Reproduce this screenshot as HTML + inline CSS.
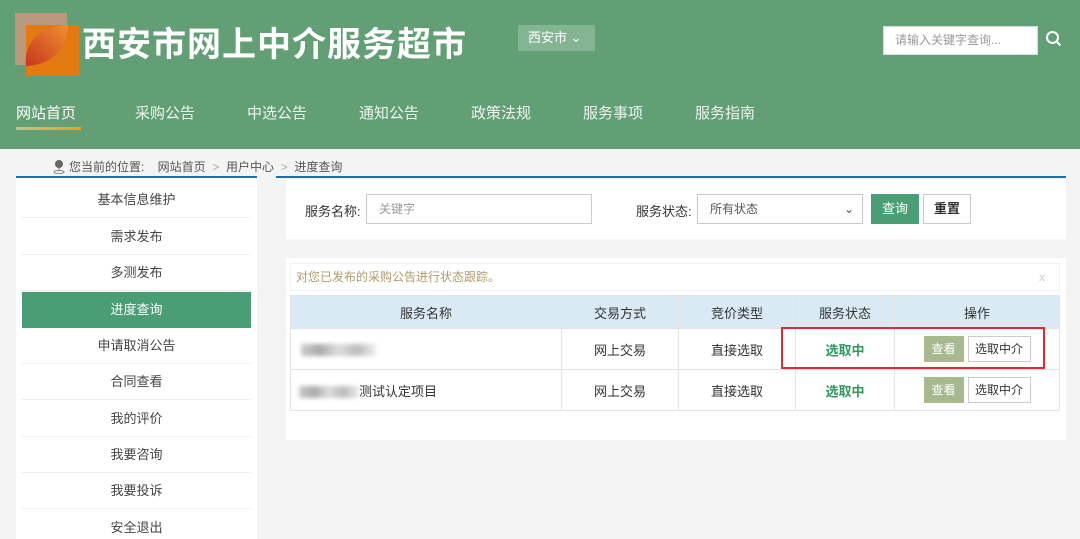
<!DOCTYPE html>
<html><head><meta charset="utf-8"><style>
*{margin:0;padding:0;box-sizing:border-box}
html,body{width:1080px;height:539px;overflow:hidden}
body{background:#f4f4f4;font-family:"Liberation Sans","Noto Sans CJK SC",sans-serif;color:#333;position:relative;font-size:13px}
.abs{position:absolute}
.hdr{left:0;top:0;width:1080px;height:149px;background:#639f75}
.title{left:82px;top:22px;font-size:34px;color:#fff;font-weight:bold;letter-spacing:1px;line-height:46px}
.city{left:518px;top:25px;width:77px;height:26px;background:#84b592;color:#fff;font-size:13px;line-height:26px;padding-left:10px}
.sbox{left:883px;top:26px;width:155px;height:29px;background:#fff;border:1px solid #ddd;color:#999;font-size:12px;line-height:27px;padding-left:11px}
.nav{top:104px;font-size:15px;color:#eef5ef;line-height:20px}
.crumb{top:158px;font-size:12px;color:#555;line-height:18px}
.side{left:16px;top:176px;width:241px;height:363px;background:#fff;border-top:2px solid #1f6fa8}
.item{position:absolute;left:6px;width:229px;height:36px;text-align:center;line-height:36px;font-size:13px;color:#444;border-bottom:1px solid #eee}
.item.on{background:#4a9e75;color:#fff;border:none}
.panel{background:#fff}
.inp{border:1px solid #ccc;background:#fff;height:30px;line-height:28px;padding-left:12px;color:#999;font-size:12px}
table{border-collapse:collapse;position:absolute;left:290px;top:295px;width:770px;font-size:13px}
td,th{border:1px solid #e3e3e3;text-align:center;font-weight:normal;color:#333}
th{background:#d9eaf4;height:33px}
td{height:41px}
.g{color:#2e9a5e;font-weight:bold}
.bv{display:inline-block;width:40px;height:26px;line-height:26px;background:#a8b98f;color:#fff;font-size:12px;vertical-align:middle}
.bs{display:inline-block;width:63px;height:26px;line-height:24px;border:1px solid #ccc;background:#fff;font-size:12px;margin-left:4px;vertical-align:middle}
.blur{display:inline-block;height:12px;background:linear-gradient(90deg,#ccc,#aaa,#ddd,#bbb,#eee);filter:blur(2px);vertical-align:middle}
</style></head><body>
<div class="abs hdr"></div>
<div class="abs" style="left:15px;top:13px;width:52px;height:52px;background:#b99a7d"></div>
<div class="abs" style="left:26px;top:25px;width:53px;height:51px;background:#e27a10"></div>
<svg class="abs" style="left:15px;top:13px" width="64" height="64"><defs><linearGradient id="lg" x1="0" y1="1" x2="1" y2="0"><stop offset="0" stop-color="#c8361e"/><stop offset="1" stop-color="#ef9030"/></linearGradient></defs><path d="M11 53 C8 28 28 12 53 12 C53 36 36 52 11 53Z" fill="url(#lg)"/></svg>
<div class="abs title">西安市网上中介服务超市</div>
<div class="abs city">西安市 ⌄</div>
<div class="abs sbox">请输入关键字查询...</div>
<svg class="abs" style="left:1045px;top:30px" width="18" height="18"><circle cx="7.5" cy="7.5" r="5.5" stroke="#fff" stroke-width="2" fill="none"/><path d="M11.5 11.5 L15.5 15.5" stroke="#fff" stroke-width="2"/></svg>
<div class="abs nav" style="left:16px;color:#fff">网站首页</div>
<div class="abs" style="left:16px;top:127px;width:65px;height:3px;background:linear-gradient(90deg,#b5c79d,#f0a010)"></div>
<div class="abs nav" style="left:135px">采购公告</div>
<div class="abs nav" style="left:247px">中选公告</div>
<div class="abs nav" style="left:359px">通知公告</div>
<div class="abs nav" style="left:471px">政策法规</div>
<div class="abs nav" style="left:583px">服务事项</div>
<div class="abs nav" style="left:695px">服务指南</div>
<svg class="abs" style="left:53px;top:159px" width="12" height="15"><circle cx="6" cy="5" r="4" fill="#666"/><path d="M6 9 L6 12" stroke="#666"/><ellipse cx="6" cy="13" rx="5" ry="1.5" fill="none" stroke="#888"/></svg>
<div class="abs crumb" style="left:69px">您当前的位置:&nbsp;&nbsp;&nbsp;&nbsp;网站首页&nbsp;&nbsp;<span style="color:#aaa">&gt;</span>&nbsp;&nbsp;用户中心&nbsp;&nbsp;<span style="color:#aaa">&gt;</span>&nbsp;&nbsp;进度查询</div>
<div class="abs" style="left:276px;top:176px;width:790px;height:2px;background:#1f6fa8"></div>
<div class="abs side">
<div class="item" style="top:4px">基本信息维护</div>
<div class="item" style="top:41px">需求发布</div>
<div class="item" style="top:77px">多测发布</div>
<div class="item on" style="top:114px">进度查询</div>
<div class="item" style="top:150px">申请取消公告</div>
<div class="item" style="top:186px">合同查看</div>
<div class="item" style="top:223px">我的评价</div>
<div class="item" style="top:259px">我要咨询</div>
<div class="item" style="top:295px">我要投诉</div>
<div class="item" style="top:332px;border:none">安全退出</div>
</div>
<div class="abs panel" style="left:286px;top:179px;width:780px;height:60px"></div>
<div class="abs" style="left:305px;top:201px">服务名称:</div>
<div class="abs inp" style="left:366px;top:194px;width:226px">关键字</div>
<div class="abs" style="left:636px;top:201px">服务状态:</div>
<div class="abs inp" style="left:697px;top:194px;width:166px;color:#555">所有状态<span style="position:absolute;right:8px;color:#555">⌄</span></div>
<div class="abs" style="left:871px;top:194px;width:48px;height:30px;background:#4a9e75;color:#fff;text-align:center;line-height:30px">查询</div>
<div class="abs" style="left:923px;top:194px;width:48px;height:30px;border:1px solid #ccc;background:#fff;text-align:center;line-height:28px;font-weight:bold">重置</div>
<div class="abs panel" style="left:286px;top:258px;width:780px;height:182px"></div>
<div class="abs" style="left:290px;top:263px;width:770px;height:28px;border:1px solid #eef3f7;color:#b09a6a;font-size:12px;line-height:26px;padding-left:5px">对您已发布的采购公告进行状态跟踪。<span style="position:absolute;right:14px;color:#ccc">x</span></div>
<table>
<tr><th style="width:271px">服务名称</th><th style="width:117px">交易方式</th><th style="width:117px">竞价类型</th><th style="width:99px">服务状态</th><th>操作</th></tr>
<tr><td style="text-align:left;padding-left:10px"><span class="blur" style="width:75px"></span></td><td>网上交易</td><td>直接选取</td><td class="g">选取中</td><td><span class="bv">查看</span><span class="bs">选取中介</span></td></tr>
<tr><td style="text-align:left;padding-left:8px"><span class="blur" style="width:60px"></span>测试认定项目</td><td>网上交易</td><td>直接选取</td><td class="g">选取中</td><td><span class="bv">查看</span><span class="bs">选取中介</span></td></tr>
</table>
<div class="abs" style="left:781px;top:327px;width:264px;height:42px;border:2px solid #e8262c"></div>
</body></html>
